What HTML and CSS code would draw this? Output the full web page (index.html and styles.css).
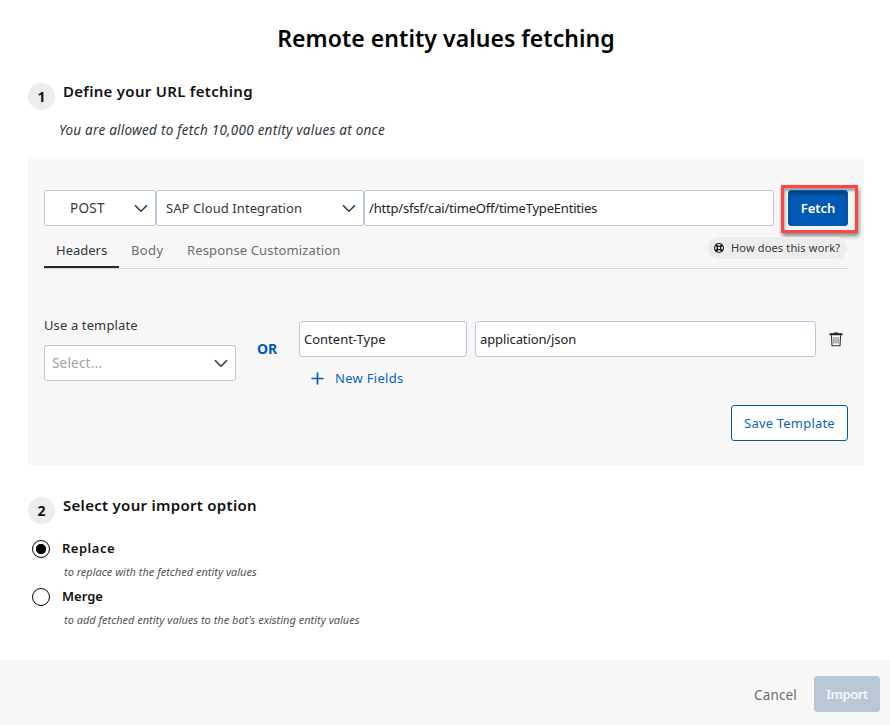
FILE: index.html
```html
<!DOCTYPE html>
<html lang="en">
<head>
<meta charset="utf-8">
<title>Remote entity values fetching</title>
<link rel="stylesheet" href="styles.css">
</head>
<body>
<main class="dialog">
  <h1 class="title"><span>Remote entity values fetching</span></h1>

  <section class="step">
    <span class="step-number">1</span>
    <h2 class="step-title">Define your URL fetching</h2>
  </section>
  <p class="step-note">You are allowed to fetch 10,000 entity values at once</p>

  <section class="panel">
    <div class="request-row">
      <div class="field method"><span class="post">POST</span><svg class="chevron" viewBox="0 0 14 9"><path d="M1 1.2 7 7.2 13 1.2"/></svg></div>
      <div class="field system"><span class="sap">SAP Cloud Integration</span><svg class="chevron" viewBox="0 0 14 9"><path d="M1 1.2 7 7.2 13 1.2"/></svg></div>
      <div class="field url"><span class="path">/http/sfsf/cai/timeOff/timeTypeEntities</span></div>
      <div class="highlight"><button class="button primary">Fetch</button></div>
    </div>

    <nav class="tabs">
      <a class="tab active">Headers</a>
      <a class="tab body-tab">Body</a>
      <a class="tab custom">Response Customization</a>
      <a class="help">
        <svg class="help-icon" viewBox="0 0 12 12"><circle cx="6" cy="6" r="4.5" fill="none" stroke="#222" stroke-width="1.1"/><circle cx="6" cy="6" r="1.7" fill="none" stroke="#222" stroke-width="1.1"/><path d="M2.6 2.6 4.8 4.8M9.4 2.6 7.2 4.8M2.6 9.4 4.8 7.2M9.4 9.4 7.2 7.2" stroke="#222" stroke-width="2.5"/></svg>
        <span>How does this work?</span>
      </a>
    </nav>

    <div class="template-row">
      <div class="template">
        <label class="label">Use a template</label>
        <div class="field select"><span class="placeholder">Select...</span><svg class="chevron" viewBox="0 0 14 9"><path d="M1 1.2 7 7.2 13 1.2"/></svg></div>
      </div>
      <span class="or">OR</span>
      <div class="header-fields">
        <div class="pair">
          <div class="field key"><span>Content-Type</span></div>
          <div class="field value"><span>application/json</span></div>
          <svg class="trash" viewBox="0 0 14 15"><path d="M.5 1.3h13v2H.5zM4.8.4h4.4v1H4.8z" fill="#222"/><path d="M2.4 3.3 3 13.8h8l.6-10.5" fill="none" stroke="#333" stroke-width="1.1"/><path d="M4.9 5v6.6M7 5v6.6M9.1 5v6.6" stroke="#777" stroke-width="1"/></svg>
        </div>
        <a class="add"><svg class="plus" viewBox="0 0 13 13"><path d="M6.5.5v12M.5 6.5h12"/></svg><span>New Fields</span></a>
      </div>
    </div>
    <div class="panel-actions"><button class="button outline">Save Template</button></div>
  </section>

  <section class="step second">
    <span class="step-number">2</span>
    <h2 class="step-title">Select your import option</h2>
  </section>
  <div class="option"><span class="radio checked"></span><span class="option-name replace">Replace</span></div>
  <p class="option-note">to replace with the fetched entity values</p>
  <div class="option"><span class="radio"></span><span class="option-name">Merge</span></div>
  <p class="option-note">to add fetched entity values to the bot's existing entity values</p>
</main>
<footer class="footer">
  <a class="cancel">Cancel</a>
  <button class="button disabled">Import</button>
</footer>
</body>
</html>
```
FILE: styles.css
```css
* { box-sizing: border-box; }
body {
  margin: 0;
  height: 725px;
  display: flex;
  flex-direction: column;
  overflow: hidden;
  background: #fff;
  color: #32363a;
  font: 13px/18px "Noto Sans", sans-serif;
  white-space: nowrap;
}
h1, h2, p { margin: 0; }
.dialog { height: 660px; padding: 22px 26px 0 28px; }
.title { height: 32px; text-align: center; font-size: 23px; line-height: 32px; font-weight: 600; letter-spacing: .04px; color: #000; }
.step { display: flex; align-items: flex-start; margin-top: 27px; gap: 8px; height: 30px; }
.step-number { width: 27px; height: 27px; margin-top: 2px; border-radius: 50%; background: #ededed; color: #111; font-size: 14px; font-weight: 700; line-height: 28px; text-align: center; }
.step-title { font-size: 15px; line-height: 20px; font-weight: 600; letter-spacing: .29px; color: #111; }
.step-note { margin: 10px 0 0 31px; font-size: 13.5px; letter-spacing: .25px; font-style: italic; }
.panel { margin-top: 19px; height: 307px; padding: 32px 16px 0; background: #f7f7f7; }
.request-row { display: flex; height: 36px; }
.field { display: flex; align-items: center; flex: none; height: 36px; border: 1px solid #b8c8d8; border-radius: 3px; background: #fff; }
.chevron { width: 14px; height: 9px; margin-left: auto; fill: none; stroke: #32363a; stroke-width: 1.6; }
.method { width: 112px; padding: 0 7px 0 25px; }
.post { font-size: 13.5px; letter-spacing: .3px; }
.system { width: 208px; padding: 0 7px 0 9px; }
.sap { letter-spacing: .08px; }
.url { width: 410px; padding-left: 4px; color: #222; }
.path { letter-spacing: -.2px; }
.highlight { flex: none; width: 77px; height: 48px; margin: -5px 0 0 7px; padding: 2px 4px; border: 3px solid #ff4444; box-shadow: 1px 3px 4px rgba(0,0,0,.45), inset 1px 3px 3px rgba(0,0,0,.35); }
.button { display: block; height: 36px; padding: 0; border: 1px solid #0059b3; border-radius: 3px; font: 13px/18px "Noto Sans", sans-serif; }
.primary { width: 60px; background: #0059b3; color: #fff; font-weight: 600; box-shadow: inset 0 3px 3px rgba(0,0,0,.3); }
.tabs { display: flex; height: 43px; padding-top: 7px; border-bottom: 1px solid #d9dadb; color: #6a6d70; }
.tab { height: 35px; line-height: 35px; }
.active { width: 75px; padding-left: 12px; color: #32363a; border-bottom: 2px solid #26292c; }
.body-tab { margin-left: 12px; width: 56px; letter-spacing: .4px; }
.custom { letter-spacing: .14px; }
.help { display: flex; align-items: center; width: 139px; height: 22px; margin: 4px 1px 0 auto; padding-left: 5px; gap: 6px; border-radius: 11px; background: #ededed; color: #32363a; font-size: 11px; letter-spacing: .16px; }
.help-icon { width: 12px; height: 12px; }
.template-row { display: flex; margin-top: 47px; height: 80px; }
.template { width: 192px; }
.label { display: block; margin-bottom: 11px; letter-spacing: .12px; }
.select { width: 192px; padding: 0 7px; }
.placeholder { color: #a0a3a6; font-size: 13.5px; letter-spacing: .2px; }
.or { width: 63px; padding-left: 21px; margin-top: 24px; color: #0059b3; font-size: 14px; font-weight: 700; }
.header-fields { margin-top: 5px; }
.pair { display: flex; align-items: center; color: #222; }
.key { width: 168px; padding-left: 4px; }
.value { width: 341px; margin-left: 8px; padding-left: 4px; letter-spacing: -.1px; }
.trash { width: 14px; height: 15px; margin-left: 13px; }
.add { display: flex; align-items: center; height: 18px; margin: 12px 0 0 12px; gap: 11px; color: #0a63be; letter-spacing: .3px; }
.plus { width: 13px; height: 13px; fill: none; stroke: #0059b3; stroke-width: 1.7; }
.panel-actions { display: flex; justify-content: flex-end; margin-top: 9px; }
.outline { width: 117px; background: #fff; color: #0a63be; letter-spacing: .2px; }
.second { margin-top: 30px; }
.option { display: flex; align-items: center; height: 18px; margin: 14px 0 0 4px; gap: 12px; }
.radio { width: 18px; height: 18px; margin-top: 2px; border: 1px solid #000; border-radius: 50%; background: #fff; }
.checked { background: radial-gradient(circle, #000 0 4.8px, #fff 5.4px); }
.option-name { color: #111; font-weight: 600; }
.replace { letter-spacing: .5px; }
.option-note { height: 16px; margin: 7px 0 0 36px; font-size: 11px; line-height: 16px; font-style: italic; color: #515559; }
.option-note + .option { margin-top: 7px; }
.footer { display: flex; align-items: center; justify-content: flex-end; height: 65px; padding: 3px 10px 0 0; gap: 17px; background: #f7f7f7; }
.cancel { margin-top: 2px; color: #6a6d70; font-size: 13.5px; letter-spacing: .15px; }
.disabled { width: 66px; border-color: #bac8d6; background: #bac8d6; color: #f4f7fa; font-weight: 600; letter-spacing: -.5px; }
```
